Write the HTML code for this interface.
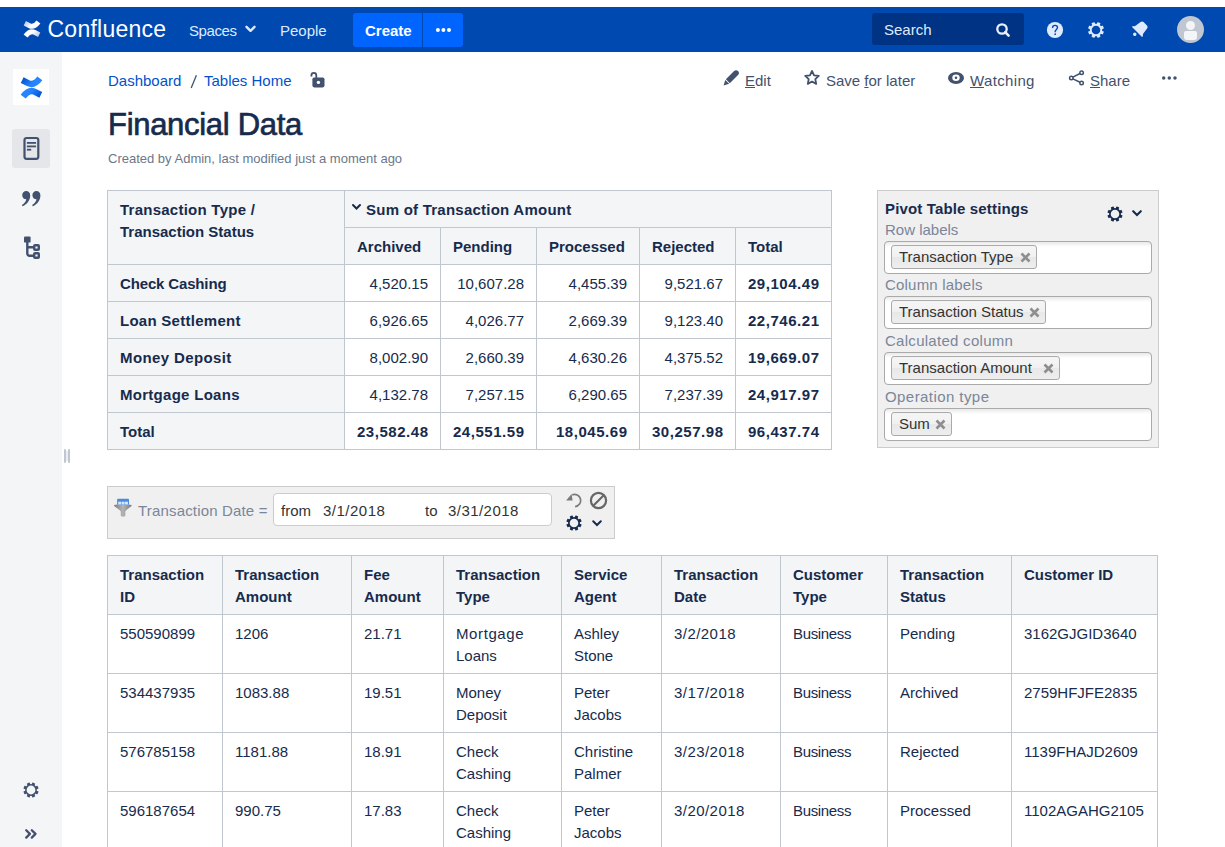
<!DOCTYPE html>
<html><head><meta charset="utf-8"><title>Financial Data - Confluence</title>
<style>
html,body{margin:0;padding:0;background:#fff;}
body{width:1225px;height:847px;overflow:hidden;position:relative;font-family:"Liberation Sans",sans-serif;}
.t{position:absolute;white-space:pre;font-family:"Liberation Sans",sans-serif;}
.r{position:absolute;}
u{text-decoration:underline;text-underline-offset:1px;}
</style></head><body>
<div class="r" style="left:0px;top:7px;width:1225px;height:45px;background:#0049B0"></div>
<svg class="r" style="left:20px;top:17px;" width="24" height="24" viewBox="0 0 24 24"><defs><linearGradient id="gw1" x1="0" y1="0" x2="1" y2="0.3"><stop offset="0" stop-color="#b4c6ea"/><stop offset="0.7" stop-color="#ffffff"/></linearGradient><linearGradient id="gw2" x1="1" y1="1" x2="0" y2="0.7"><stop offset="0" stop-color="#b4c6ea"/><stop offset="0.7" stop-color="#ffffff"/></linearGradient></defs><path d="M4.8 6.3 L9.6 8.7 C12.2 10 15.2 9.2 18.45 4.95" fill="none" stroke="url(#gw1)" stroke-width="4.9"/><path d="M19.2 17.7 L14.4 15.3 C11.8 14 8.8 14.8 5.55 19.05" fill="none" stroke="url(#gw2)" stroke-width="4.9"/></svg>
<div class="t" style="left:47.5px;top:18px;font-size:23px;line-height:23px;font-weight:normal;color:#FFFFFF;letter-spacing:0.25px;">Confluence</div>
<div class="t" style="left:189px;top:23px;font-size:15px;line-height:15px;font-weight:normal;color:#DEEBFF;letter-spacing:-0.4px;">Spaces</div>
<svg class="r" style="left:245px;top:25px;" width="11" height="8" viewBox="0 0 11 8"><path d="M1.5 1.8 L5.5 5.8 L9.5 1.8" fill="none" stroke="#DEEBFF" stroke-width="2.4" stroke-linecap="round" stroke-linejoin="round"/></svg>
<div class="t" style="left:280px;top:23px;font-size:15px;line-height:15px;font-weight:normal;color:#DEEBFF;">People</div>
<div class="r" style="left:353px;top:13px;width:110px;height:34px;background:#0065FF;border-radius:3px"></div>
<div class="r" style="left:422px;top:13px;width:1px;height:34px;background:#0049B0"></div>
<div class="t" style="left:365px;top:23px;font-size:15px;line-height:15px;font-weight:bold;color:#FFFFFF;">Create</div>
<svg class="r" style="left:430px;top:24px;" width="26" height="12" viewBox="0 0 26 12"><circle cx="7.9" cy="6" r="2" fill="#fff"/><circle cx="13.4" cy="6" r="2" fill="#fff"/><circle cx="19" cy="6" r="2" fill="#fff"/></svg>
<div class="r" style="left:872px;top:13px;width:152px;height:32px;background:#003384;border-radius:3px"></div>
<div class="t" style="left:884px;top:22px;font-size:15px;line-height:15px;font-weight:normal;color:#DEEBFF;">Search</div>
<svg class="r" style="left:995px;top:22px;" width="17" height="17" viewBox="0 0 17 17"><circle cx="7" cy="7" r="4.7" fill="none" stroke="#E9F0FF" stroke-width="2.3"/><path d="M10.2 10.2 L13.6 13.6" stroke="#E9F0FF" stroke-width="2.6" stroke-linecap="round"/></svg>
<svg class="r" style="left:1046px;top:21px;" width="18" height="18" viewBox="0 0 18 18"><circle cx="9" cy="9" r="8.1" fill="#DEEBFF"/><path d="M6.5 7.1 C6.5 5.3 7.6 4.4 9 4.4 C10.5 4.4 11.5 5.4 11.5 6.6 C11.5 8.3 9.2 8.6 9.2 10.6 V11.3" fill="none" stroke="#0049B0" stroke-width="1.35"/><circle cx="9.2" cy="13.2" r="0.9" fill="#0049B0"/></svg>
<svg class="r" style="left:1085.6px;top:19.9px" width="20" height="20" viewBox="0 0 20 20"><circle cx="10.0" cy="10.0" r="5.25" fill="none" stroke="#DEEBFF" stroke-width="1.9000000000000004"/><rect x="8.4" y="2.0" width="3.2" height="2.8" rx="0.5" fill="#DEEBFF" transform="rotate(22.5 10.0 10.0)"/><rect x="8.4" y="2.0" width="3.2" height="2.8" rx="0.5" fill="#DEEBFF" transform="rotate(67.5 10.0 10.0)"/><rect x="8.4" y="2.0" width="3.2" height="2.8" rx="0.5" fill="#DEEBFF" transform="rotate(112.5 10.0 10.0)"/><rect x="8.4" y="2.0" width="3.2" height="2.8" rx="0.5" fill="#DEEBFF" transform="rotate(157.5 10.0 10.0)"/><rect x="8.4" y="2.0" width="3.2" height="2.8" rx="0.5" fill="#DEEBFF" transform="rotate(202.5 10.0 10.0)"/><rect x="8.4" y="2.0" width="3.2" height="2.8" rx="0.5" fill="#DEEBFF" transform="rotate(247.5 10.0 10.0)"/><rect x="8.4" y="2.0" width="3.2" height="2.8" rx="0.5" fill="#DEEBFF" transform="rotate(292.5 10.0 10.0)"/><rect x="8.4" y="2.0" width="3.2" height="2.8" rx="0.5" fill="#DEEBFF" transform="rotate(337.5 10.0 10.0)"/></svg>
<svg class="r" style="left:1130px;top:19px;" width="20" height="20" viewBox="0 0 20 20"><g transform="rotate(45 10 10)"><path d="M7.6 2.6 h4.8 c1.2 0 2 0.8 2.2 2 l0.9 6.2 c0.2 1 0.9 1.6 1.6 2.2 v1.2 h-14.2 v-1.2 c0.7-0.6 1.4-1.2 1.6-2.2 l0.9-6.2 c0.2-1.2 1-2 2.2-2z" fill="#DEEBFF"/><circle cx="10" cy="17.4" r="1.7" fill="#DEEBFF"/></g></svg>
<div class="r" style="left:1177px;top:16px;width:27px;height:27px;background:#C1C7D0;border-radius:50%"></div>
<div class="r" style="left:1186px;top:21px;width:9px;height:9px;background:#F4F5F7;border-radius:50%"></div>
<div class="r" style="left:1184px;top:31px;width:13px;height:9px;background:#F4F5F7;border-radius:2px 2px 3px 3px"></div>
<div class="r" style="left:0px;top:52px;width:62px;height:795px;background:#F4F5F7"></div>
<div class="r" style="left:13px;top:69px;width:36px;height:36px;background:#fff"></div>
<svg class="r" style="left:15.5px;top:71.5px;" width="31" height="31" viewBox="0 0 24 24"><defs><linearGradient id="gb1" x1="0" y1="0" x2="1" y2="0.3"><stop offset="0" stop-color="#0052CC"/><stop offset="0.8" stop-color="#2684FF"/></linearGradient><linearGradient id="gb2" x1="1" y1="1" x2="0" y2="0.7"><stop offset="0" stop-color="#0052CC"/><stop offset="0.8" stop-color="#2684FF"/></linearGradient></defs><path d="M4.8 6.3 L9.6 8.7 C12.2 10 15.2 9.2 18.45 4.95" fill="none" stroke="url(#gb1)" stroke-width="4.9"/><path d="M19.2 17.7 L14.4 15.3 C11.8 14 8.8 14.8 5.55 19.05" fill="none" stroke="url(#gb2)" stroke-width="4.9"/></svg>
<div class="r" style="left:12px;top:129px;width:38px;height:39px;background:#E4E6EA;border-radius:3px"></div>
<svg class="r" style="left:23px;top:136px;" width="17" height="25" viewBox="0 0 17 25"><rect x="1.5" y="2" width="13.8" height="20.8" rx="2" fill="none" stroke="#42526E" stroke-width="2.2"/><rect x="3.9" y="6" width="9.2" height="1.8" fill="#42526E"/><rect x="3.9" y="9.5" width="9.2" height="1.8" fill="#42526E"/><rect x="3.9" y="12.8" width="4.3" height="1.8" fill="#42526E"/></svg>
<svg class="r" style="left:21px;top:190px;" width="21" height="17" viewBox="0 0 21 17"><path d="M5.2 1 C7.6 1 9.2 2.8 9.2 5.4 C9.2 10 6.4 14 1.6 16.2 L0.9 15.1 C3.6 13.5 5 11.4 5.3 9.3 C2.9 9.2 1.2 7.5 1.2 5.2 C1.2 2.7 3 1 5.2 1 Z" fill="#42526E"/><path transform="translate(10.2 0)" d="M5.2 1 C7.6 1 9.2 2.8 9.2 5.4 C9.2 10 6.4 14 1.6 16.2 L0.9 15.1 C3.6 13.5 5 11.4 5.3 9.3 C2.9 9.2 1.2 7.5 1.2 5.2 C1.2 2.7 3 1 5.2 1 Z" fill="#42526E"/></svg>
<svg class="r" style="left:23px;top:235px;" width="18" height="25" viewBox="0 0 18 25"><rect x="1" y="1.4" width="6.6" height="6.2" rx="1.2" fill="#42526E"/><path d="M4.3 6 V18.6 a2.2 2.2 0 0 0 2.2 2.2 H10.5 M4.3 12.3 H10.5" fill="none" stroke="#42526E" stroke-width="2.4"/><rect x="11.2" y="10.2" width="4.6" height="4.6" rx="0.8" fill="none" stroke="#42526E" stroke-width="2.4"/><rect x="11.2" y="18.2" width="4.6" height="4.6" rx="0.8" fill="none" stroke="#42526E" stroke-width="2.4"/></svg>
<svg class="r" style="left:21.0px;top:779.9px" width="20" height="20" viewBox="0 0 20 20"><circle cx="10.0" cy="10.0" r="5.15" fill="none" stroke="#42526E" stroke-width="1.5"/><rect x="8.45" y="2.4000000000000004" width="3.1" height="2.6999999999999993" rx="0.5" fill="#42526E" transform="rotate(22.5 10.0 10.0)"/><rect x="8.45" y="2.4000000000000004" width="3.1" height="2.6999999999999993" rx="0.5" fill="#42526E" transform="rotate(67.5 10.0 10.0)"/><rect x="8.45" y="2.4000000000000004" width="3.1" height="2.6999999999999993" rx="0.5" fill="#42526E" transform="rotate(112.5 10.0 10.0)"/><rect x="8.45" y="2.4000000000000004" width="3.1" height="2.6999999999999993" rx="0.5" fill="#42526E" transform="rotate(157.5 10.0 10.0)"/><rect x="8.45" y="2.4000000000000004" width="3.1" height="2.6999999999999993" rx="0.5" fill="#42526E" transform="rotate(202.5 10.0 10.0)"/><rect x="8.45" y="2.4000000000000004" width="3.1" height="2.6999999999999993" rx="0.5" fill="#42526E" transform="rotate(247.5 10.0 10.0)"/><rect x="8.45" y="2.4000000000000004" width="3.1" height="2.6999999999999993" rx="0.5" fill="#42526E" transform="rotate(292.5 10.0 10.0)"/><rect x="8.45" y="2.4000000000000004" width="3.1" height="2.6999999999999993" rx="0.5" fill="#42526E" transform="rotate(337.5 10.0 10.0)"/></svg>
<svg class="r" style="left:24px;top:828px;" width="14" height="12" viewBox="0 0 14 12"><path d="M2.2 2.2 L5.9 5.9 L2.2 9.6 M7.8 2.2 L11.5 5.9 L7.8 9.6" fill="none" stroke="#42526E" stroke-width="2.3" stroke-linecap="round" stroke-linejoin="round"/></svg>
<div class="r" style="left:64px;top:449px;width:2px;height:14px;background:#C1C7D0;border-radius:1px"></div>
<div class="r" style="left:66px;top:451px;width:2px;height:10px;background:#EBECF0"></div>
<div class="r" style="left:68px;top:449px;width:2px;height:14px;background:#C1C7D0;border-radius:1px"></div>
<div class="t" style="left:108px;top:73px;font-size:15px;line-height:15px;font-weight:normal;color:#0052CC;">Dashboard</div>
<svg class="r" style="left:189px;top:73px;" width="10" height="17" viewBox="0 0 10 17"><path d="M7.4 2.2 L2.2 15" stroke="#42526E" stroke-width="1.3"/></svg>
<div class="t" style="left:204px;top:73px;font-size:15px;line-height:15px;font-weight:normal;color:#0052CC;">Tables Home</div>
<svg class="r" style="left:308px;top:70px;" width="20" height="20" viewBox="0 0 20 20"><path d="M3.4 6.4 V5.4 a2.45 2.45 0 0 1 4.9 0 V8" fill="none" stroke="#42526E" stroke-width="1.8"/><rect x="4.4" y="7.5" width="12.1" height="9.9" rx="1.8" fill="#42526E"/><circle cx="10.4" cy="12.4" r="1.7" fill="#fff"/></svg>
<svg class="r" style="left:722px;top:69px;" width="18" height="18" viewBox="0 0 18 18"><path d="M3.9 10.3 L12.1 2.1 A2.75 2.75 0 0 1 16 6 L7.8 14.2 Z" fill="#42526E"/><path d="M3.26 10.94 L7.16 14.84 L1.6 16.4 Z" fill="#42526E"/></svg>
<div class="t" style="left:745px;top:73px;font-size:15px;line-height:15px;font-weight:normal;color:#42526E;"><u>E</u>dit</div>
<svg class="r" style="left:803px;top:69px;" width="18" height="18" viewBox="0 0 18 18"><path d="M9 2 L11.05 6.35 L15.8 6.9 L12.3 10.15 L13.2 14.9 L9 12.55 L4.8 14.9 L5.7 10.15 L2.2 6.9 L6.95 6.35 Z" fill="none" stroke="#42526E" stroke-width="1.8" stroke-linejoin="round"/></svg>
<div class="t" style="left:826px;top:73px;font-size:15px;line-height:15px;font-weight:normal;color:#42526E;">Save <u>f</u>or later</div>
<svg class="r" style="left:947px;top:71px;" width="18" height="14" viewBox="0 0 18 14"><ellipse cx="9" cy="6.9" rx="8" ry="6" fill="#42526E"/><ellipse cx="9" cy="6.8" rx="3.7" ry="3.2" fill="#fff"/><circle cx="9" cy="6.8" r="1.3" fill="#42526E"/></svg>
<div class="t" style="left:970px;top:73px;font-size:15px;line-height:15px;font-weight:normal;color:#42526E;letter-spacing:0.35px;"><u>W</u>atching</div>
<svg class="r" style="left:1067px;top:69px;" width="18" height="18" viewBox="0 0 18 18"><circle cx="14.6" cy="3.7" r="1.75" fill="none" stroke="#42526E" stroke-width="1.5"/><circle cx="4.3" cy="9" r="1.75" fill="none" stroke="#42526E" stroke-width="1.5"/><circle cx="14.6" cy="14.1" r="1.75" fill="none" stroke="#42526E" stroke-width="1.5"/><path d="M5.9 8.1 L13 4.5 M5.9 9.9 L13 13.3" stroke="#42526E" stroke-width="1.5"/></svg>
<div class="t" style="left:1090px;top:73px;font-size:15px;line-height:15px;font-weight:normal;color:#42526E;"><u>S</u>hare</div>
<svg class="r" style="left:1158px;top:72px;" width="24" height="12" viewBox="0 0 24 12"><circle cx="5.7" cy="5.9" r="1.75" fill="#42526E"/><circle cx="11.3" cy="5.9" r="1.75" fill="#42526E"/><circle cx="17" cy="5.9" r="1.75" fill="#42526E"/></svg>
<div class="t" style="left:108px;top:109px;font-size:31px;line-height:31px;font-weight:normal;color:#172B4D;-webkit-text-stroke:0.7px #172B4D;letter-spacing:-0.3px;">Financial Data</div>
<div class="t" style="left:108px;top:152px;font-size:13px;line-height:13px;font-weight:normal;color:#6B778C;">Created by Admin, last modified just a moment ago</div>
<div class="r" style="left:107px;top:190px;width:724px;height:74px;background:#F4F5F7"></div>
<div class="r" style="left:107px;top:264px;width:237px;height:185px;background:#F4F5F7"></div>
<div class="r" style="left:107px;top:190px;width:1px;height:260px;background:#C1C7D0"></div>
<div class="r" style="left:344px;top:190px;width:1px;height:260px;background:#C1C7D0"></div>
<div class="r" style="left:440px;top:227px;width:1px;height:223px;background:#C1C7D0"></div>
<div class="r" style="left:536px;top:227px;width:1px;height:223px;background:#C1C7D0"></div>
<div class="r" style="left:639px;top:227px;width:1px;height:223px;background:#C1C7D0"></div>
<div class="r" style="left:735px;top:227px;width:1px;height:223px;background:#C1C7D0"></div>
<div class="r" style="left:831px;top:190px;width:1px;height:260px;background:#C1C7D0"></div>
<div class="r" style="left:107px;top:190px;width:725px;height:1px;background:#C1C7D0"></div>
<div class="r" style="left:344px;top:227px;width:488px;height:1px;background:#C1C7D0"></div>
<div class="r" style="left:107px;top:264px;width:725px;height:1px;background:#C1C7D0"></div>
<div class="r" style="left:107px;top:301px;width:725px;height:1px;background:#C1C7D0"></div>
<div class="r" style="left:107px;top:338px;width:725px;height:1px;background:#C1C7D0"></div>
<div class="r" style="left:107px;top:375px;width:725px;height:1px;background:#C1C7D0"></div>
<div class="r" style="left:107px;top:412px;width:725px;height:1px;background:#C1C7D0"></div>
<div class="r" style="left:107px;top:449px;width:725px;height:1px;background:#C1C7D0"></div>
<div class="t" style="left:120px;top:202px;font-size:15px;line-height:15px;font-weight:bold;color:#172B4D;letter-spacing:0.25px;">Transaction Type /</div>
<div class="t" style="left:120px;top:224px;font-size:15px;line-height:15px;font-weight:bold;color:#172B4D;">Transaction Status</div>
<svg class="r" style="left:351px;top:203px;" width="11" height="8" viewBox="0 0 11 8"><path d="M2 2 L5.5 5.5 L9 2" fill="none" stroke="#172B4D" stroke-width="2" stroke-linecap="round"/></svg>
<div class="t" style="left:366px;top:202px;font-size:15px;line-height:15px;font-weight:bold;color:#172B4D;letter-spacing:0.24px;">Sum of Transaction Amount</div>
<div class="t" style="left:357px;top:239px;font-size:15px;line-height:15px;font-weight:bold;color:#172B4D;">Archived</div>
<div class="t" style="left:453px;top:239px;font-size:15px;line-height:15px;font-weight:bold;color:#172B4D;">Pending</div>
<div class="t" style="left:549px;top:239px;font-size:15px;line-height:15px;font-weight:bold;color:#172B4D;">Processed</div>
<div class="t" style="left:652px;top:239px;font-size:15px;line-height:15px;font-weight:bold;color:#172B4D;">Rejected</div>
<div class="t" style="left:748px;top:239px;font-size:15px;line-height:15px;font-weight:bold;color:#172B4D;">Total</div>
<div class="t" style="left:120px;top:276px;font-size:15px;line-height:15px;font-weight:bold;color:#172B4D;letter-spacing:-0.15px;">Check Cashing</div>
<div class="t" style="right:797px;top:276px;font-size:15px;line-height:15px;font-weight:normal;color:#172B4D;text-align:right;">4,520.15</div>
<div class="t" style="right:701px;top:276px;font-size:15px;line-height:15px;font-weight:normal;color:#172B4D;text-align:right;">10,607.28</div>
<div class="t" style="right:598px;top:276px;font-size:15px;line-height:15px;font-weight:normal;color:#172B4D;text-align:right;">4,455.39</div>
<div class="t" style="right:502px;top:276px;font-size:15px;line-height:15px;font-weight:normal;color:#172B4D;text-align:right;">9,521.67</div>
<div class="t" style="right:405.45000000000005px;top:276px;font-size:15px;line-height:15px;font-weight:bold;color:#172B4D;text-align:right;letter-spacing:0.55px;">29,104.49</div>
<div class="t" style="left:120px;top:313px;font-size:15px;line-height:15px;font-weight:bold;color:#172B4D;letter-spacing:0.27px;">Loan Settlement</div>
<div class="t" style="right:797px;top:313px;font-size:15px;line-height:15px;font-weight:normal;color:#172B4D;text-align:right;">6,926.65</div>
<div class="t" style="right:701px;top:313px;font-size:15px;line-height:15px;font-weight:normal;color:#172B4D;text-align:right;">4,026.77</div>
<div class="t" style="right:598px;top:313px;font-size:15px;line-height:15px;font-weight:normal;color:#172B4D;text-align:right;">2,669.39</div>
<div class="t" style="right:502px;top:313px;font-size:15px;line-height:15px;font-weight:normal;color:#172B4D;text-align:right;">9,123.40</div>
<div class="t" style="right:405.45000000000005px;top:313px;font-size:15px;line-height:15px;font-weight:bold;color:#172B4D;text-align:right;letter-spacing:0.55px;">22,746.21</div>
<div class="t" style="left:120px;top:350px;font-size:15px;line-height:15px;font-weight:bold;color:#172B4D;letter-spacing:0.38px;">Money Deposit</div>
<div class="t" style="right:797px;top:350px;font-size:15px;line-height:15px;font-weight:normal;color:#172B4D;text-align:right;">8,002.90</div>
<div class="t" style="right:701px;top:350px;font-size:15px;line-height:15px;font-weight:normal;color:#172B4D;text-align:right;">2,660.39</div>
<div class="t" style="right:598px;top:350px;font-size:15px;line-height:15px;font-weight:normal;color:#172B4D;text-align:right;">4,630.26</div>
<div class="t" style="right:502px;top:350px;font-size:15px;line-height:15px;font-weight:normal;color:#172B4D;text-align:right;">4,375.52</div>
<div class="t" style="right:405.45000000000005px;top:350px;font-size:15px;line-height:15px;font-weight:bold;color:#172B4D;text-align:right;letter-spacing:0.55px;">19,669.07</div>
<div class="t" style="left:120px;top:387px;font-size:15px;line-height:15px;font-weight:bold;color:#172B4D;letter-spacing:0.28px;">Mortgage Loans</div>
<div class="t" style="right:797px;top:387px;font-size:15px;line-height:15px;font-weight:normal;color:#172B4D;text-align:right;">4,132.78</div>
<div class="t" style="right:701px;top:387px;font-size:15px;line-height:15px;font-weight:normal;color:#172B4D;text-align:right;">7,257.15</div>
<div class="t" style="right:598px;top:387px;font-size:15px;line-height:15px;font-weight:normal;color:#172B4D;text-align:right;">6,290.65</div>
<div class="t" style="right:502px;top:387px;font-size:15px;line-height:15px;font-weight:normal;color:#172B4D;text-align:right;">7,237.39</div>
<div class="t" style="right:405.45000000000005px;top:387px;font-size:15px;line-height:15px;font-weight:bold;color:#172B4D;text-align:right;letter-spacing:0.55px;">24,917.97</div>
<div class="t" style="left:120px;top:424px;font-size:15px;line-height:15px;font-weight:bold;color:#172B4D;letter-spacing:0px;">Total</div>
<div class="t" style="right:796.45px;top:424px;font-size:15px;line-height:15px;font-weight:bold;color:#172B4D;text-align:right;letter-spacing:0.55px;">23,582.48</div>
<div class="t" style="right:700.45px;top:424px;font-size:15px;line-height:15px;font-weight:bold;color:#172B4D;text-align:right;letter-spacing:0.55px;">24,551.59</div>
<div class="t" style="right:597.45px;top:424px;font-size:15px;line-height:15px;font-weight:bold;color:#172B4D;text-align:right;letter-spacing:0.55px;">18,045.69</div>
<div class="t" style="right:501.45000000000005px;top:424px;font-size:15px;line-height:15px;font-weight:bold;color:#172B4D;text-align:right;letter-spacing:0.55px;">30,257.98</div>
<div class="t" style="right:405.45000000000005px;top:424px;font-size:15px;line-height:15px;font-weight:bold;color:#172B4D;text-align:right;letter-spacing:0.55px;">96,437.74</div>
<div class="r" style="left:877px;top:190px;width:282px;height:258px;background:#F0F0F0;border:1px solid #CCCCCC;box-sizing:border-box"></div>
<div class="t" style="left:885px;top:201px;font-size:15px;line-height:15px;font-weight:bold;color:#172B4D;letter-spacing:0.15px;">Pivot Table settings</div>
<svg class="r" style="left:1104.9px;top:203.8px" width="20" height="20" viewBox="0 0 20 20"><circle cx="10.0" cy="10.0" r="5.15" fill="none" stroke="#172B4D" stroke-width="1.7000000000000002"/><rect x="8.5" y="2.4000000000000004" width="3.0" height="2.5999999999999996" rx="0.5" fill="#172B4D" transform="rotate(22.5 10.0 10.0)"/><rect x="8.5" y="2.4000000000000004" width="3.0" height="2.5999999999999996" rx="0.5" fill="#172B4D" transform="rotate(67.5 10.0 10.0)"/><rect x="8.5" y="2.4000000000000004" width="3.0" height="2.5999999999999996" rx="0.5" fill="#172B4D" transform="rotate(112.5 10.0 10.0)"/><rect x="8.5" y="2.4000000000000004" width="3.0" height="2.5999999999999996" rx="0.5" fill="#172B4D" transform="rotate(157.5 10.0 10.0)"/><rect x="8.5" y="2.4000000000000004" width="3.0" height="2.5999999999999996" rx="0.5" fill="#172B4D" transform="rotate(202.5 10.0 10.0)"/><rect x="8.5" y="2.4000000000000004" width="3.0" height="2.5999999999999996" rx="0.5" fill="#172B4D" transform="rotate(247.5 10.0 10.0)"/><rect x="8.5" y="2.4000000000000004" width="3.0" height="2.5999999999999996" rx="0.5" fill="#172B4D" transform="rotate(292.5 10.0 10.0)"/><rect x="8.5" y="2.4000000000000004" width="3.0" height="2.5999999999999996" rx="0.5" fill="#172B4D" transform="rotate(337.5 10.0 10.0)"/></svg>
<svg class="r" style="left:1131px;top:209px;" width="12" height="9" viewBox="0 0 12 9"><path d="M2.2 2.2 L6 6 L9.8 2.2" fill="none" stroke="#172B4D" stroke-width="2.1" stroke-linecap="round"/></svg>
<div class="t" style="left:885px;top:222px;font-size:15px;line-height:15px;font-weight:normal;color:#7A869A;letter-spacing:0px;">Row labels</div>
<div class="r" style="left:884px;top:241px;width:268px;height:33px;background:linear-gradient(#e9e9e9,#ffffff 5px);border:1px solid #AAAAAA;border-radius:4px;box-sizing:border-box"></div>
<div class="r" style="left:891px;top:245px;width:146px;height:24px;background:linear-gradient(#f4f4f4 20%,#f0f0f0 50%,#e8e8e8 52%,#eeeeee 100%);border:1px solid #AAAAAA;border-radius:3px;box-sizing:border-box"></div>
<div class="t" style="left:899px;top:249px;font-size:15px;line-height:15px;font-weight:normal;color:#333333;">Transaction Type</div>
<svg class="r" style="left:1020px;top:251.5px;" width="11" height="11" viewBox="0 0 11 11"><path d="M1.5 1.5 L9.5 9.5 M9.5 1.5 L1.5 9.5" stroke="#8E8E8E" stroke-width="2.6"/></svg>
<div class="t" style="left:885px;top:277px;font-size:15px;line-height:15px;font-weight:normal;color:#7A869A;letter-spacing:0.2px;">Column labels</div>
<div class="r" style="left:884px;top:296px;width:268px;height:33px;background:linear-gradient(#e9e9e9,#ffffff 5px);border:1px solid #AAAAAA;border-radius:4px;box-sizing:border-box"></div>
<div class="r" style="left:891px;top:300px;width:155px;height:24px;background:linear-gradient(#f4f4f4 20%,#f0f0f0 50%,#e8e8e8 52%,#eeeeee 100%);border:1px solid #AAAAAA;border-radius:3px;box-sizing:border-box"></div>
<div class="t" style="left:899px;top:304px;font-size:15px;line-height:15px;font-weight:normal;color:#333333;">Transaction Status</div>
<svg class="r" style="left:1029px;top:306.5px;" width="11" height="11" viewBox="0 0 11 11"><path d="M1.5 1.5 L9.5 9.5 M9.5 1.5 L1.5 9.5" stroke="#8E8E8E" stroke-width="2.6"/></svg>
<div class="t" style="left:885px;top:333px;font-size:15px;line-height:15px;font-weight:normal;color:#7A869A;letter-spacing:0.28px;">Calculated column</div>
<div class="r" style="left:884px;top:352px;width:268px;height:33px;background:linear-gradient(#e9e9e9,#ffffff 5px);border:1px solid #AAAAAA;border-radius:4px;box-sizing:border-box"></div>
<div class="r" style="left:891px;top:356px;width:169px;height:24px;background:linear-gradient(#f4f4f4 20%,#f0f0f0 50%,#e8e8e8 52%,#eeeeee 100%);border:1px solid #AAAAAA;border-radius:3px;box-sizing:border-box"></div>
<div class="t" style="left:899px;top:360px;font-size:15px;line-height:15px;font-weight:normal;color:#333333;">Transaction Amount</div>
<svg class="r" style="left:1043px;top:362.5px;" width="11" height="11" viewBox="0 0 11 11"><path d="M1.5 1.5 L9.5 9.5 M9.5 1.5 L1.5 9.5" stroke="#8E8E8E" stroke-width="2.6"/></svg>
<div class="t" style="left:885px;top:389px;font-size:15px;line-height:15px;font-weight:normal;color:#7A869A;letter-spacing:0.43px;">Operation type</div>
<div class="r" style="left:884px;top:408px;width:268px;height:33px;background:linear-gradient(#e9e9e9,#ffffff 5px);border:1px solid #AAAAAA;border-radius:4px;box-sizing:border-box"></div>
<div class="r" style="left:891px;top:412px;width:61px;height:24px;background:linear-gradient(#f4f4f4 20%,#f0f0f0 50%,#e8e8e8 52%,#eeeeee 100%);border:1px solid #AAAAAA;border-radius:3px;box-sizing:border-box"></div>
<div class="t" style="left:899px;top:416px;font-size:15px;line-height:15px;font-weight:normal;color:#333333;">Sum</div>
<svg class="r" style="left:935px;top:418.5px;" width="11" height="11" viewBox="0 0 11 11"><path d="M1.5 1.5 L9.5 9.5 M9.5 1.5 L1.5 9.5" stroke="#8E8E8E" stroke-width="2.6"/></svg>
<div class="r" style="left:107px;top:486px;width:508px;height:53px;background:#F0F0F0;border:1px solid #CCCCCC;box-sizing:border-box"></div>
<svg class="r" style="left:113px;top:498px;" width="20" height="20" viewBox="0 0 20 20"><defs><linearGradient id="fg" x1="0" y1="0" x2="1" y2="0"><stop offset="0" stop-color="#7c7c7c"/><stop offset="0.5" stop-color="#b4b4b4"/><stop offset="1" stop-color="#7c7c7c"/></linearGradient></defs><path d="M0.9 7.6 C0.9 5.8 18.8 5.8 18.8 7.6 C18.8 8.6 13.6 11.4 12.3 13.4 V18 Q10 19.3 7.8 18 V13.4 C6.5 11.4 0.9 8.6 0.9 7.6 Z" fill="url(#fg)"/><rect x="4.1" y="0.8" width="11.9" height="6" rx="0.8" fill="#4A8BE0"/><rect x="5.2" y="3.7" width="3" height="2.8" fill="#d6e6fa"/><rect x="8.6" y="3.7" width="3" height="2.8" fill="#d6e6fa"/><rect x="12" y="3.7" width="3" height="2.8" fill="#d6e6fa"/></svg>
<div class="t" style="left:138px;top:503px;font-size:15px;line-height:15px;font-weight:normal;color:#7A869A;letter-spacing:0.17px;">Transaction Date =</div>
<div class="r" style="left:273px;top:493px;width:279px;height:33px;background:#fff;border:1px solid #CCCCCC;border-radius:4px;box-sizing:border-box"></div>
<div class="t" style="left:281px;top:503px;font-size:15px;line-height:15px;font-weight:normal;color:#333333;">from</div>
<div class="t" style="left:323px;top:503px;font-size:15px;line-height:15px;font-weight:normal;color:#333333;letter-spacing:0.5px;">3/1/2018</div>
<div class="t" style="left:425px;top:503px;font-size:15px;line-height:15px;font-weight:normal;color:#333333;">to</div>
<div class="t" style="left:448px;top:503px;font-size:15px;line-height:15px;font-weight:normal;color:#333333;letter-spacing:0.45px;">3/31/2018</div>
<svg class="r" style="left:565px;top:492px;" width="18" height="17" viewBox="0 0 18 17"><path d="M7.2 2.9 A6.1 6.1 0 1 1 10.1 14.6" fill="none" stroke="#7a7a7a" stroke-width="1.7"/><path d="M1.1 8.6 L6.6 1.9 L7.6 8.6 Z" fill="#7a7a7a"/></svg>
<svg class="r" style="left:589px;top:491px;" width="19" height="19" viewBox="0 0 19 19"><circle cx="9.5" cy="9.5" r="7.6" fill="none" stroke="#666" stroke-width="2.2"/><path d="M4.5 14.5 L14.5 4.5" stroke="#666" stroke-width="2.2"/></svg>
<svg class="r" style="left:564.4px;top:512.8px" width="20" height="20" viewBox="0 0 20 20"><circle cx="10.0" cy="10.0" r="5.15" fill="none" stroke="#172B4D" stroke-width="1.7000000000000002"/><rect x="8.5" y="2.3" width="3.0" height="2.7" rx="0.5" fill="#172B4D" transform="rotate(22.5 10.0 10.0)"/><rect x="8.5" y="2.3" width="3.0" height="2.7" rx="0.5" fill="#172B4D" transform="rotate(67.5 10.0 10.0)"/><rect x="8.5" y="2.3" width="3.0" height="2.7" rx="0.5" fill="#172B4D" transform="rotate(112.5 10.0 10.0)"/><rect x="8.5" y="2.3" width="3.0" height="2.7" rx="0.5" fill="#172B4D" transform="rotate(157.5 10.0 10.0)"/><rect x="8.5" y="2.3" width="3.0" height="2.7" rx="0.5" fill="#172B4D" transform="rotate(202.5 10.0 10.0)"/><rect x="8.5" y="2.3" width="3.0" height="2.7" rx="0.5" fill="#172B4D" transform="rotate(247.5 10.0 10.0)"/><rect x="8.5" y="2.3" width="3.0" height="2.7" rx="0.5" fill="#172B4D" transform="rotate(292.5 10.0 10.0)"/><rect x="8.5" y="2.3" width="3.0" height="2.7" rx="0.5" fill="#172B4D" transform="rotate(337.5 10.0 10.0)"/></svg>
<svg class="r" style="left:591px;top:518.5px;" width="12" height="9" viewBox="0 0 12 9"><path d="M2.2 2.2 L6 6 L9.8 2.2" fill="none" stroke="#172B4D" stroke-width="2" stroke-linecap="round"/></svg>
<div class="r" style="left:107px;top:555px;width:1050px;height:59px;background:#F4F5F7"></div>
<div class="r" style="left:107px;top:555px;width:1px;height:295px;background:#C1C7D0"></div>
<div class="r" style="left:222px;top:555px;width:1px;height:295px;background:#C1C7D0"></div>
<div class="r" style="left:351px;top:555px;width:1px;height:295px;background:#C1C7D0"></div>
<div class="r" style="left:443px;top:555px;width:1px;height:295px;background:#C1C7D0"></div>
<div class="r" style="left:561px;top:555px;width:1px;height:295px;background:#C1C7D0"></div>
<div class="r" style="left:661px;top:555px;width:1px;height:295px;background:#C1C7D0"></div>
<div class="r" style="left:780px;top:555px;width:1px;height:295px;background:#C1C7D0"></div>
<div class="r" style="left:887px;top:555px;width:1px;height:295px;background:#C1C7D0"></div>
<div class="r" style="left:1011px;top:555px;width:1px;height:295px;background:#C1C7D0"></div>
<div class="r" style="left:1157px;top:555px;width:1px;height:295px;background:#C1C7D0"></div>
<div class="r" style="left:107px;top:555px;width:1051px;height:1px;background:#C1C7D0"></div>
<div class="r" style="left:107px;top:614px;width:1051px;height:1px;background:#C1C7D0"></div>
<div class="r" style="left:107px;top:673px;width:1051px;height:1px;background:#C1C7D0"></div>
<div class="r" style="left:107px;top:732px;width:1051px;height:1px;background:#C1C7D0"></div>
<div class="r" style="left:107px;top:791px;width:1051px;height:1px;background:#C1C7D0"></div>
<div class="r" style="left:107px;top:850px;width:1051px;height:1px;background:#C1C7D0"></div>
<div class="t" style="left:120px;top:567px;font-size:15px;line-height:15px;font-weight:bold;color:#172B4D;">Transaction</div>
<div class="t" style="left:120px;top:589px;font-size:15px;line-height:15px;font-weight:bold;color:#172B4D;">ID</div>
<div class="t" style="left:235px;top:567px;font-size:15px;line-height:15px;font-weight:bold;color:#172B4D;">Transaction</div>
<div class="t" style="left:235px;top:589px;font-size:15px;line-height:15px;font-weight:bold;color:#172B4D;">Amount</div>
<div class="t" style="left:364px;top:567px;font-size:15px;line-height:15px;font-weight:bold;color:#172B4D;">Fee</div>
<div class="t" style="left:364px;top:589px;font-size:15px;line-height:15px;font-weight:bold;color:#172B4D;">Amount</div>
<div class="t" style="left:456px;top:567px;font-size:15px;line-height:15px;font-weight:bold;color:#172B4D;">Transaction</div>
<div class="t" style="left:456px;top:589px;font-size:15px;line-height:15px;font-weight:bold;color:#172B4D;">Type</div>
<div class="t" style="left:574px;top:567px;font-size:15px;line-height:15px;font-weight:bold;color:#172B4D;">Service</div>
<div class="t" style="left:574px;top:589px;font-size:15px;line-height:15px;font-weight:bold;color:#172B4D;">Agent</div>
<div class="t" style="left:674px;top:567px;font-size:15px;line-height:15px;font-weight:bold;color:#172B4D;">Transaction</div>
<div class="t" style="left:674px;top:589px;font-size:15px;line-height:15px;font-weight:bold;color:#172B4D;">Date</div>
<div class="t" style="left:793px;top:567px;font-size:15px;line-height:15px;font-weight:bold;color:#172B4D;">Customer</div>
<div class="t" style="left:793px;top:589px;font-size:15px;line-height:15px;font-weight:bold;color:#172B4D;">Type</div>
<div class="t" style="left:900px;top:567px;font-size:15px;line-height:15px;font-weight:bold;color:#172B4D;">Transaction</div>
<div class="t" style="left:900px;top:589px;font-size:15px;line-height:15px;font-weight:bold;color:#172B4D;">Status</div>
<div class="t" style="left:1024px;top:567px;font-size:15px;line-height:15px;font-weight:bold;color:#172B4D;">Customer ID</div>
<div class="t" style="left:120px;top:626px;font-size:15px;line-height:15px;font-weight:normal;color:#172B4D;letter-spacing:0px;">550590899</div>
<div class="t" style="left:235px;top:626px;font-size:15px;line-height:15px;font-weight:normal;color:#172B4D;letter-spacing:0px;">1206</div>
<div class="t" style="left:364px;top:626px;font-size:15px;line-height:15px;font-weight:normal;color:#172B4D;letter-spacing:0px;">21.71</div>
<div class="t" style="left:456px;top:626px;font-size:15px;line-height:15px;font-weight:normal;color:#172B4D;letter-spacing:0.6px;">Mortgage</div>
<div class="t" style="left:456px;top:648px;font-size:15px;line-height:15px;font-weight:normal;color:#172B4D;letter-spacing:0px;">Loans</div>
<div class="t" style="left:574px;top:626px;font-size:15px;line-height:15px;font-weight:normal;color:#172B4D;letter-spacing:0px;">Ashley</div>
<div class="t" style="left:574px;top:648px;font-size:15px;line-height:15px;font-weight:normal;color:#172B4D;letter-spacing:0px;">Stone</div>
<div class="t" style="left:674px;top:626px;font-size:15px;line-height:15px;font-weight:normal;color:#172B4D;letter-spacing:0.45px;">3/2/2018</div>
<div class="t" style="left:793px;top:626px;font-size:15px;line-height:15px;font-weight:normal;color:#172B4D;letter-spacing:-0.35px;">Business</div>
<div class="t" style="left:900px;top:626px;font-size:15px;line-height:15px;font-weight:normal;color:#172B4D;letter-spacing:0px;">Pending</div>
<div class="t" style="left:1024px;top:626px;font-size:15px;line-height:15px;font-weight:normal;color:#172B4D;letter-spacing:0px;">3162GJGID3640</div>
<div class="t" style="left:120px;top:685px;font-size:15px;line-height:15px;font-weight:normal;color:#172B4D;letter-spacing:0px;">534437935</div>
<div class="t" style="left:235px;top:685px;font-size:15px;line-height:15px;font-weight:normal;color:#172B4D;letter-spacing:0px;">1083.88</div>
<div class="t" style="left:364px;top:685px;font-size:15px;line-height:15px;font-weight:normal;color:#172B4D;letter-spacing:0px;">19.51</div>
<div class="t" style="left:456px;top:685px;font-size:15px;line-height:15px;font-weight:normal;color:#172B4D;letter-spacing:0px;">Money</div>
<div class="t" style="left:456px;top:707px;font-size:15px;line-height:15px;font-weight:normal;color:#172B4D;letter-spacing:0px;">Deposit</div>
<div class="t" style="left:574px;top:685px;font-size:15px;line-height:15px;font-weight:normal;color:#172B4D;letter-spacing:0px;">Peter</div>
<div class="t" style="left:574px;top:707px;font-size:15px;line-height:15px;font-weight:normal;color:#172B4D;letter-spacing:0px;">Jacobs</div>
<div class="t" style="left:674px;top:685px;font-size:15px;line-height:15px;font-weight:normal;color:#172B4D;letter-spacing:0.45px;">3/17/2018</div>
<div class="t" style="left:793px;top:685px;font-size:15px;line-height:15px;font-weight:normal;color:#172B4D;letter-spacing:-0.35px;">Business</div>
<div class="t" style="left:900px;top:685px;font-size:15px;line-height:15px;font-weight:normal;color:#172B4D;letter-spacing:0px;">Archived</div>
<div class="t" style="left:1024px;top:685px;font-size:15px;line-height:15px;font-weight:normal;color:#172B4D;letter-spacing:0px;">2759HFJFE2835</div>
<div class="t" style="left:120px;top:744px;font-size:15px;line-height:15px;font-weight:normal;color:#172B4D;letter-spacing:0px;">576785158</div>
<div class="t" style="left:235px;top:744px;font-size:15px;line-height:15px;font-weight:normal;color:#172B4D;letter-spacing:0px;">1181.88</div>
<div class="t" style="left:364px;top:744px;font-size:15px;line-height:15px;font-weight:normal;color:#172B4D;letter-spacing:0px;">18.91</div>
<div class="t" style="left:456px;top:744px;font-size:15px;line-height:15px;font-weight:normal;color:#172B4D;letter-spacing:0px;">Check</div>
<div class="t" style="left:456px;top:766px;font-size:15px;line-height:15px;font-weight:normal;color:#172B4D;letter-spacing:0px;">Cashing</div>
<div class="t" style="left:574px;top:744px;font-size:15px;line-height:15px;font-weight:normal;color:#172B4D;letter-spacing:0px;">Christine</div>
<div class="t" style="left:574px;top:766px;font-size:15px;line-height:15px;font-weight:normal;color:#172B4D;letter-spacing:0px;">Palmer</div>
<div class="t" style="left:674px;top:744px;font-size:15px;line-height:15px;font-weight:normal;color:#172B4D;letter-spacing:0.45px;">3/23/2018</div>
<div class="t" style="left:793px;top:744px;font-size:15px;line-height:15px;font-weight:normal;color:#172B4D;letter-spacing:-0.35px;">Business</div>
<div class="t" style="left:900px;top:744px;font-size:15px;line-height:15px;font-weight:normal;color:#172B4D;letter-spacing:0px;">Rejected</div>
<div class="t" style="left:1024px;top:744px;font-size:15px;line-height:15px;font-weight:normal;color:#172B4D;letter-spacing:0px;">1139FHAJD2609</div>
<div class="t" style="left:120px;top:803px;font-size:15px;line-height:15px;font-weight:normal;color:#172B4D;letter-spacing:0px;">596187654</div>
<div class="t" style="left:235px;top:803px;font-size:15px;line-height:15px;font-weight:normal;color:#172B4D;letter-spacing:0px;">990.75</div>
<div class="t" style="left:364px;top:803px;font-size:15px;line-height:15px;font-weight:normal;color:#172B4D;letter-spacing:0px;">17.83</div>
<div class="t" style="left:456px;top:803px;font-size:15px;line-height:15px;font-weight:normal;color:#172B4D;letter-spacing:0px;">Check</div>
<div class="t" style="left:456px;top:825px;font-size:15px;line-height:15px;font-weight:normal;color:#172B4D;letter-spacing:0px;">Cashing</div>
<div class="t" style="left:574px;top:803px;font-size:15px;line-height:15px;font-weight:normal;color:#172B4D;letter-spacing:0px;">Peter</div>
<div class="t" style="left:574px;top:825px;font-size:15px;line-height:15px;font-weight:normal;color:#172B4D;letter-spacing:0px;">Jacobs</div>
<div class="t" style="left:674px;top:803px;font-size:15px;line-height:15px;font-weight:normal;color:#172B4D;letter-spacing:0.45px;">3/20/2018</div>
<div class="t" style="left:793px;top:803px;font-size:15px;line-height:15px;font-weight:normal;color:#172B4D;letter-spacing:-0.35px;">Business</div>
<div class="t" style="left:900px;top:803px;font-size:15px;line-height:15px;font-weight:normal;color:#172B4D;letter-spacing:0px;">Processed</div>
<div class="t" style="left:1024px;top:803px;font-size:15px;line-height:15px;font-weight:normal;color:#172B4D;letter-spacing:0px;">1102AGAHG2105</div>
</body></html>
